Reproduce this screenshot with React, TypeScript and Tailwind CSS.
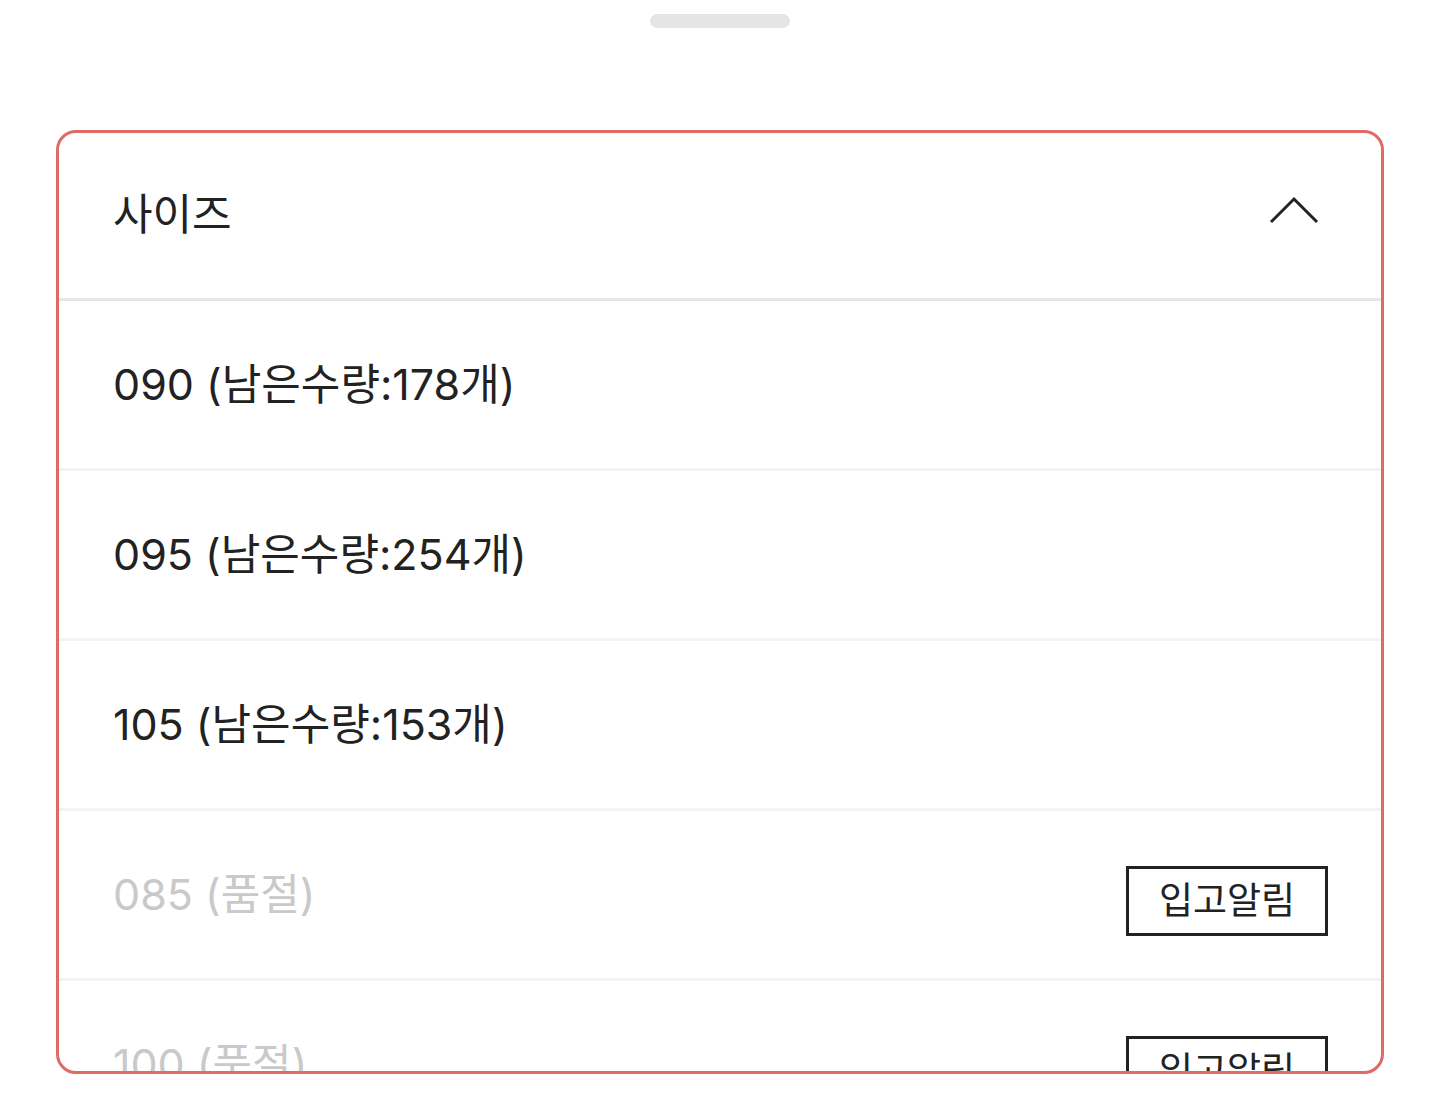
import React from "react";

const font = { fontFamily: 'Inter, "Noto Sans CJK KR", "Noto Sans", sans-serif' };

type SizeOption = { size: string; stock: number | null };

const options: SizeOption[] = [
  { size: "090", stock: 178 },
  { size: "095", stock: 254 },
  { size: "105", stock: 153 },
  { size: "085", stock: null },
  { size: "100", stock: null },
];

const ChevronUp = () => (
  <svg width="50" height="30" viewBox="0 0 50 30" fill="none">
    <polyline points="2,27 25,4 48,27" stroke="#222" strokeWidth="3" />
  </svg>
);

const OptionRow = ({ item }: { item: SizeOption }) => {
  const soldOut = item.stock === null;
  return (
    <div className="flex h-[170px] shrink-0 items-center justify-between border-b-[3px] border-[#f3f3f3] pl-[54px] pr-[53px]">
      <span className={`text-[43px] ${soldOut ? "text-[#c9c9c9]" : "text-[#222]"}`}>
        {soldOut ? `${item.size} (품절)` : `${item.size} (남은수량:${item.stock}개)`}
      </span>
      {soldOut && (
        <button className="mt-[12px] flex h-[70px] w-[202px] items-center justify-center border-[3px] border-[#222] text-[37px] text-[#222]">
          입고알림
        </button>
      )}
    </div>
  );
};

export default function App() {
  return (
    <div className="h-[1098px] w-[1440px] overflow-hidden bg-white" style={font}>
      <div className="flex justify-center pt-[14px]">
        <div className="h-[14px] w-[140px] rounded-full bg-[#e5e5e5]" />
      </div>
      <div className="mx-[56px] mt-[102px] h-[944px] overflow-hidden rounded-[20px] border-[3px] border-[#e06a64]">
        <div className="flex h-[168px] items-center justify-between border-b-[3px] border-[#e6e6e6] pb-[3px] pl-[54px] pr-[62px]">
          <span className="text-[43px] text-[#222]">사이즈</span>
          <div className="mb-[9px]">
            <ChevronUp />
          </div>
        </div>
        <div className="flex flex-col">
          {options.map((item) => (
            <OptionRow key={item.size} item={item} />
          ))}
        </div>
      </div>
    </div>
  );
}
